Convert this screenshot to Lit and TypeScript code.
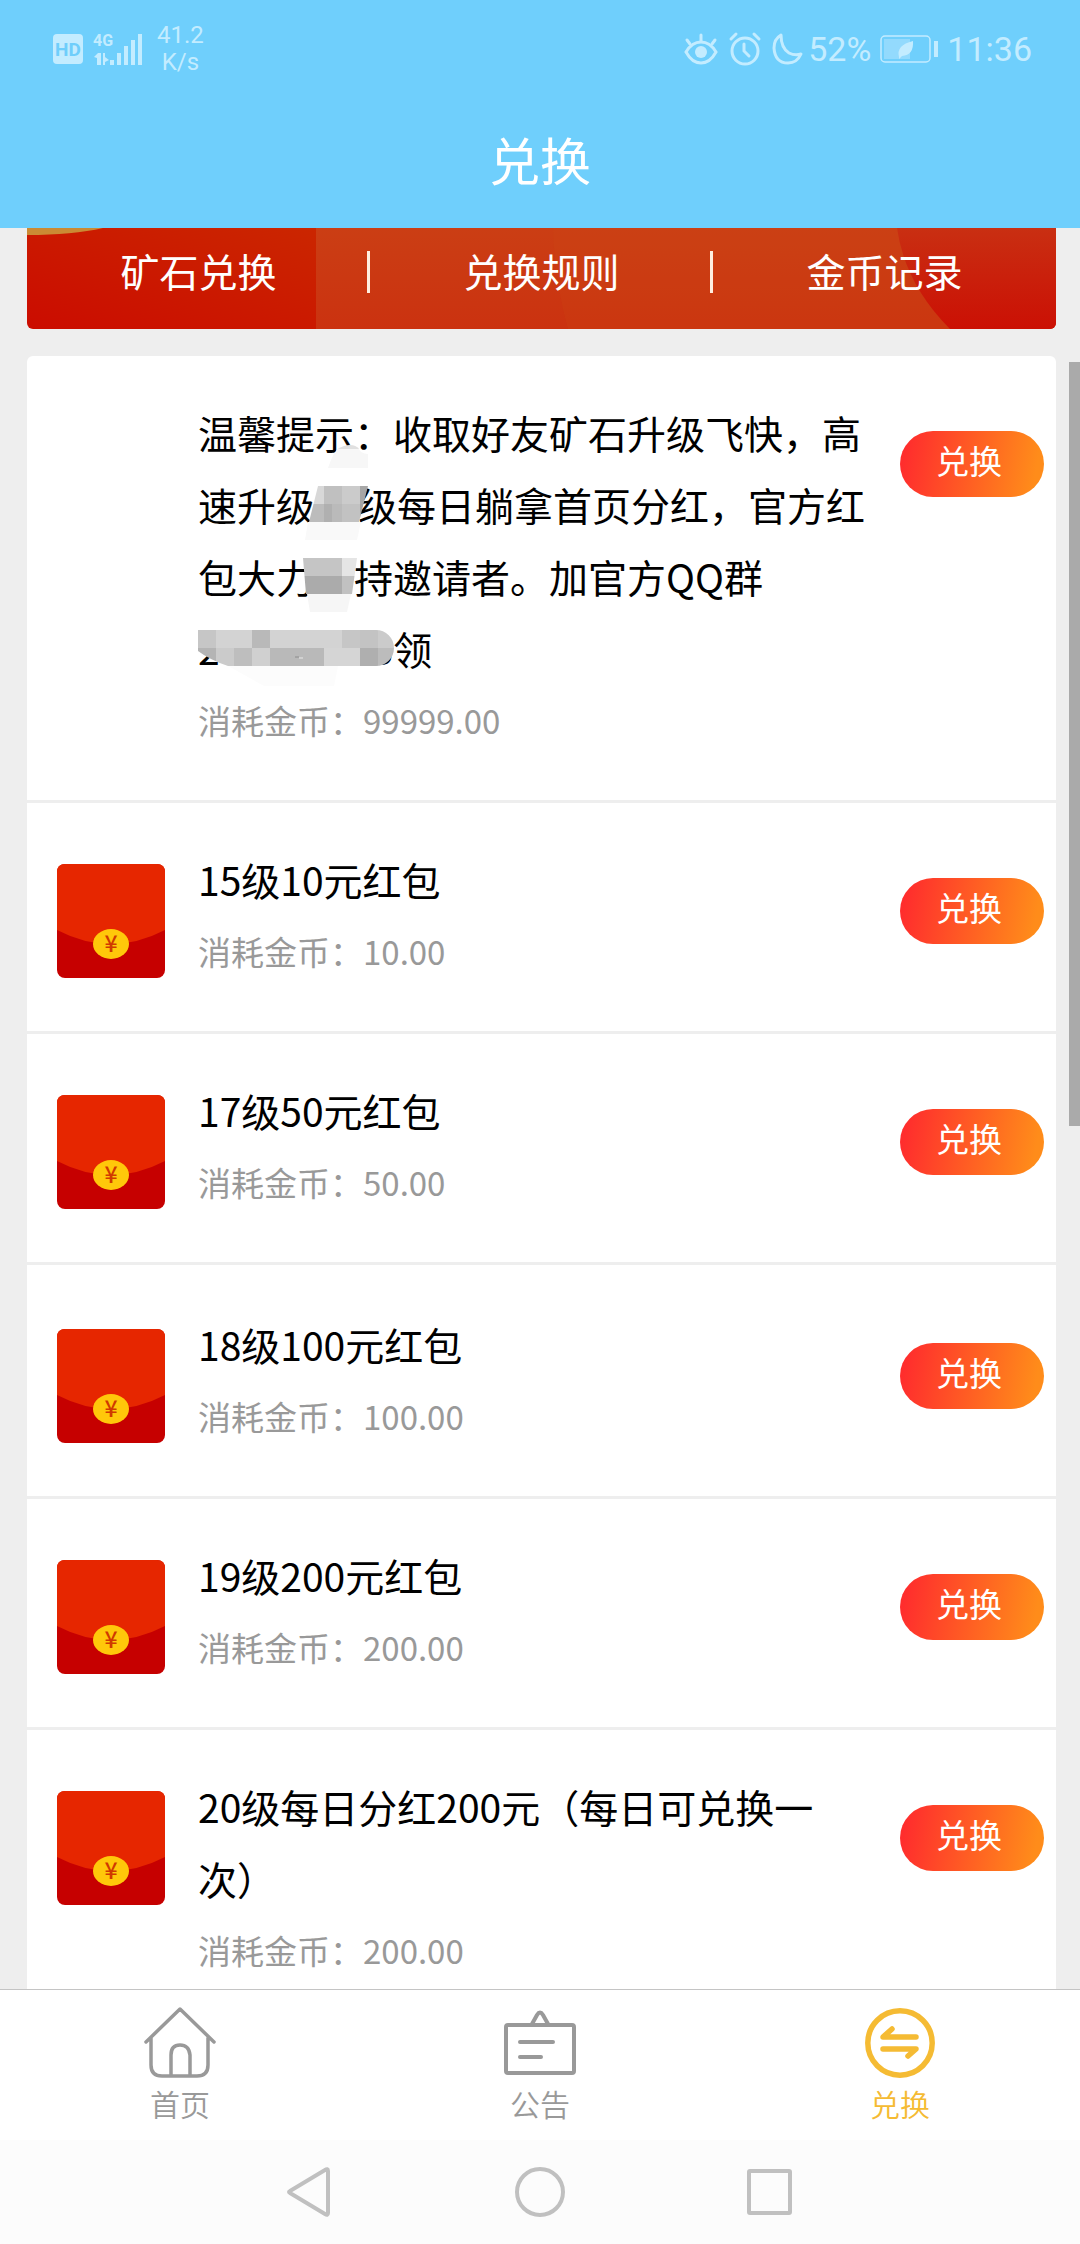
import { LitElement, html, css, svg, nothing } from "lit";
import { customElement, property } from "lit/decorators.js";
import { classMap } from "lit/directives/class-map.js";

interface Reward {
  title: unknown;
  cost: string;
  image: boolean;
  pageStart?: boolean;
}

type Cell = [x: number, y: number, width: number, fill: string];

/* Pixelated blocks laid over the censored parts of the notice, 18px per row. */
const cells: Cell[] = [
  [108, 88, 18, "#d8d8d8"], [126, 88, 18, "#c0c0c0"], [144, 88, 18, "#cbcbcb"], [162, 88, 10, "#a6a6a6"],
  [108, 106, 18, "#bcbcbc"], [126, 106, 8, "#b0b0b0"], [134, 106, 10, "#bababa"], [144, 106, 18, "#c2c2c2"], [162, 106, 10, "#a2a2a2"],
  [104, 160, 40, "#c5c5c5"], [144, 160, 18, "#e5e5e5"],
  [104, 178, 40, "#ababab"], [144, 178, 18, "#c1c1c1"],
  [0, 232, 18, "#c6c6c6"], [18, 232, 36, "#d3d3d3"], [54, 232, 18, "#b9b9b9"], [72, 232, 72, "#d3d3d3"], [144, 232, 18, "#c6c6c6"], [162, 232, 18, "#c3c3c3"], [180, 232, 18, "#cbcbcb"],
  [0, 250, 18, "#b4b4b4"], [18, 250, 18, "#cbcbcb"], [36, 250, 18, "#bebebe"], [54, 250, 18, "#d0d0d0"], [72, 250, 54, "#b9b9b9"], [126, 250, 36, "#d5d5d5"], [162, 250, 18, "#afafaf"], [180, 250, 18, "#bcbcbc"],
];

const mosaic = html`<svg class="mosaic" viewBox="0 -2 200 310" aria-hidden="true">
  <clipPath id="smudge">
    <path d="M120 88H170L161 124H111Z" />
    <path d="M105 160H159L154 196H108Z" />
    <path d="M0 232H178A18 18 0 0 1 178 268H30Q12 262 0 253Z" />
  </clipPath>
  <path d="M130 70Q136 52 142 49H160Q162 56 170 56V70Z" fill="#f7f7f7" />
  <path d="M140 51Q146 47 152 47Q158 47 161 51Z" fill="#e0e0e0" />
  <path d="M110 124H163L159 142H107Z" fill="#f9f9f9" />
  <path d="M109 196H153L149 214H112Z" fill="#f6f6f6" />
  <path d="M30 268H140L136 288H66Z" fill="#fcfcfc" />
  <g clip-path="url(#smudge)">
    ${cells.map(([x, y, w, fill]) => svg`<rect x=${x} y=${y} width=${w} height="18" fill=${fill} shape-rendering="crispEdges" />`)}
    <path d="M97 259h4" stroke="#8c8c8c" stroke-width="1" />
    <path d="M101 260h4" stroke="#e8e8e8" stroke-width="1" />
  </g>
</svg>`;

const notice = html`温馨提示：收取好友矿石升级飞快，高速升级<span class="gap two-digits"></span>级每日躺拿首页分红，官方红包大力<span class="gap one-glyph"></span>持邀请者。加官方QQ群<span class="number">2<span class="gap seven-digits"></span>3</span>领${mosaic}`;

const rewards: Reward[] = [
  { title: notice, cost: "99999.00", image: false },
  { title: "15级10元红包", cost: "10.00", image: true },
  { title: "17级50元红包", cost: "50.00", image: true },
  { title: "18级100元红包", cost: "100.00", image: true, pageStart: true },
  { title: "19级200元红包", cost: "200.00", image: true },
  { title: "20级每日分红200元（每日可兑换一次）", cost: "200.00", image: true },
];

const fontStack = css`Roboto, "Noto Sans CJK SC", sans-serif`;
const cjkStack = css`"Noto Sans CJK SC", "Noto Sans", sans-serif`;

@customElement("status-bar")
class StatusBar extends LitElement {
  static styles = css`
    :host {
      display: flex;
      justify-content: space-between;
      align-items: center;
      height: 98px;
      padding: 0 48px 0 53px;
      color: #c3ecff;
      font-family: ${fontStack};
    }
    .group { display: flex; align-items: center; gap: 8px; }
    .icons { display: flex; align-items: center; gap: 12px; margin-right: -3px; }
    svg { display: block; overflow: visible; fill: none; stroke: currentColor; }
    .solid { fill: currentColor; stroke: none; }
    .hd { fill: #6fcefb; stroke: none; font: 700 19px Roboto, sans-serif; }
    .net { fill: currentColor; stroke: none; font: 700 16px Roboto, sans-serif; }
    .rate { font-size: 24px; line-height: 27px; text-align: center; margin-left: 6px; }
    .big { font-size: 34px; line-height: 40px; }
  `;

  render() {
    return html`
      <div class="group">
        <svg width="30" height="30" viewBox="0 0 30 30" role="img" aria-label="HD">
          <rect class="solid" width="30" height="30" rx="4" />
          <text class="hd" x="15" y="22" text-anchor="middle">HD</text>
        </svg>
        <svg width="52" height="32" viewBox="0 0 52 32" role="img" aria-label="4G">
          <text class="net" x="2" y="13">4G</text>
          <path class="solid" d="M3 24L7 20H10V32H6V25ZM12 20H14V24L18 27L14 29V32H12ZM19 27h4v5h-4ZM26 20h4v12h-4ZM33 13h4v19h-4ZM40 7h4v25h-4ZM47 1h4v31h-4Z" />
        </svg>
        <div class="rate">41.2<br />K/s</div>
      </div>
      <div class="group">
        <div class="icons">
          <svg width="34" height="32" viewBox="0 0 34 32" stroke-width="3" stroke-linecap="round">
            <path d="M2 19Q8 9 17 9T32 19Q26 30 17 30T2 19Z" />
            <path d="M17 8V2M6 11L3 7M28 11L31 7" />
            <circle class="solid" cx="17" cy="19" r="6" />
          </svg>
          <svg width="30" height="32" viewBox="0 0 30 32" stroke-width="3" stroke-linecap="round">
            <circle cx="15" cy="18" r="13" />
            <path d="M14 11V18L19 23M1 6L6 1M29 6L24 1" />
          </svg>
          <svg width="31" height="32" viewBox="0 0 31 32" stroke-width="3" stroke-linejoin="round">
            <path d="M9 2Q2 6 2 15Q3 30 16 30Q25 30 29 21Q23 23 17 20Q9 15 9 2Z" />
          </svg>
        </div>
        <span class="big">52%</span>
        <svg width="60" height="28" viewBox="0 0 60 28" stroke-width="2">
          <rect x="2" y="1" width="49" height="26" rx="4" stroke-width="1.5" />
          <rect x="5" y="4" width="26" height="20" fill="#93dafd" stroke="none" />
          <path class="solid" d="M20 22Q17 10 34 6Q35 20 23 21L20 24ZM55 6h4v16h-4Z" />
        </svg>
        <span class="big">11:36</span>
      </div>
    `;
  }
}

@customElement("reward-row")
class RewardRow extends LitElement {
  @property({ attribute: false }) reward!: Reward;

  static styles = css`
    :host { display: block; border-bottom: 3px solid #eee; }
    .row {
      display: grid;
      grid-template-columns: 108px minmax(0, 1fr) 144px;
      align-items: start;
      padding: 40px 12px 44px 30px;
    }
    .page-start { padding-top: 43px; }
    .picture { width: 108px; height: 114px; margin-top: 21px; }
    .picture svg { display: block; }
    .yen { font: 500 23px ${cjkStack}; fill: #d03a00; }
    .info { padding: 0 30px 0 33px; }
    h2, p { margin: 0; font-weight: 400; line-height: 72px; text-spacing-trim: space-all; }
    h2 { position: relative; font-size: 39px; color: #000; }
    p { font-size: 33px; color: #999; }
    .gap { display: inline-block; height: 1px; }
    .two-digits { width: 43px; }
    .one-glyph { width: 39px; }
    .seven-digits { width: 152px; }
    .number { white-space: nowrap; }
    .mosaic { position: absolute; left: 0; top: 0; width: 200px; height: 310px; }
    button {
      height: 66px;
      margin-top: 35px;
      padding: 0 6px 8px 0;
      border: 0;
      border-radius: 33px;
      background: linear-gradient(100deg, #ff2d2d 5%, #ff8c1a 92%);
      color: #fff;
      font: 400 33px/58px ${cjkStack};
    }
  `;

  private envelope() {
    return html`<svg width="108" height="114" viewBox="0 0 108 114" aria-hidden="true">
      <rect width="108" height="114" rx="8" fill="#c60000" />
      <path d="M0 8Q0 0 8 0H100Q108 0 108 8V66Q54 94 0 66Z" fill="#e62600" />
      <ellipse cx="54" cy="80" rx="18" ry="15" fill="#ffc80a" />
      <text class="yen" x="54" y="88" text-anchor="middle">¥</text>
    </svg>`;
  }

  render() {
    const { title, cost, image, pageStart } = this.reward;
    return html`
      <div class=${classMap({ row: true, "page-start": !!pageStart })}>
        <div class="picture">${image ? this.envelope() : nothing}</div>
        <div class="info">
          <h2>${title}</h2>
          <p>消耗金币：${cost}</p>
        </div>
        <button type="button">兑换</button>
      </div>
    `;
  }
}

@customElement("app-root")
class AppRoot extends LitElement {
  static styles = css`
    :host {
      display: flex;
      flex-direction: column;
      height: 100vh;
      overflow: hidden;
      background: #eee;
      font-family: ${cjkStack};
    }
    a { color: inherit; text-decoration: none; }
    header { background: #6fcffc; }
    h1 {
      margin: 0;
      padding-bottom: 8px;
      color: #fff;
      font-size: 51px;
      font-weight: 400;
      line-height: 122px;
      text-align: center;
    }
    main {
      position: relative;
      flex: 1;
      min-height: 0;
      overflow: hidden;
      padding: 0 24px 0 27px;
    }
    .thumb {
      position: absolute;
      top: 134px;
      right: 0;
      width: 11px;
      height: 764px;
      background: #aaa;
    }
    .banner {
      position: relative;
      display: grid;
      grid-template-columns: repeat(3, 1fr);
      padding: 23px 0 36px;
      border-radius: 0 0 6px 6px;
      overflow: hidden;
      color: #fff;
      font-size: 39px;
      line-height: 38px;
      text-align: center;
    }
    .art { position: absolute; inset: 0; width: 100%; height: 100%; }
    .banner a { position: relative; padding-bottom: 4px; }
    .banner a + a { box-shadow: -3px 0 #ffeee0; }
    .list { margin-top: 27px; border-radius: 6px 6px 0 0; background: #fff; overflow: hidden; }
    .tabs {
      display: grid;
      grid-template-columns: repeat(3, 1fr);
      border-top: 1px solid #c4c4c4;
      background: #fff;
    }
    .tab {
      display: flex;
      flex-direction: column;
      align-items: center;
      padding: 16px 0;
      color: #999;
      font-size: 30px;
      font-weight: 350;
      line-height: 42px;
    }
    .tab svg { display: block; margin-bottom: 4px; fill: none; stroke: currentColor; stroke-linecap: round; stroke-linejoin: round; }
    .active { color: #f5bb33; }
    .system { display: flex; padding: 0 18%; background: #fcfcfc; }
    .system button {
      flex: 1;
      display: flex;
      justify-content: center;
      align-items: center;
      height: 104px;
      padding: 0;
      border: 0;
      background: none;
    }
    .system svg { fill: none; stroke: #c0c0c0; stroke-width: 4; stroke-linejoin: round; }
  `;

  render() {
    return html`
      <header>
        <status-bar></status-bar>
        <h1>兑换</h1>
      </header>
      <main>
        <nav class="banner">
          <svg class="art" viewBox="0 0 1029 101" preserveAspectRatio="none" aria-hidden="true">
            <defs>
              <linearGradient id="deep" x1="1" y1="0" x2="0" y2="1">
                <stop offset="0" stop-color="#cb2600" />
                <stop offset="1" stop-color="#cb0c00" />
              </linearGradient>
              <linearGradient id="warm" x1="0" y1="0" x2="0" y2="1">
                <stop offset="0" stop-color="#cb3e14" />
                <stop offset="1" stop-color="#cb3210" />
              </linearGradient>
              <linearGradient id="edge" x1="0" y1="0" x2="0" y2="1">
                <stop offset="0" stop-color="#c92f12" />
                <stop offset="1" stop-color="#cb1004" />
              </linearGradient>
            </defs>
            <rect width="290" height="101" fill="url(#deep)" />
            <path d="M289 0H1029V101H289Z" fill="url(#warm)" />
            <path d="M526 0Q527 50 541 101H1029V0Z" fill="#cb4a14" opacity="0.2" />
            <path d="M870 0Q878 56 923 101H1029V0Z" fill="url(#edge)" />
            <path d="M0 0H76Q46 7 0 7Z" fill="#cb8a34" />
          </svg>
          <a href="#ore">矿石兑换</a>
          <a href="#rules">兑换规则</a>
          <a href="#records">金币记录</a>
        </nav>
        <section class="list">
          ${rewards.map((reward) => html`<reward-row .reward=${reward}></reward-row>`)}
        </section>
        <div class="thumb"></div>
      </main>
      <nav class="tabs">
        <a class="tab" href="#home">
          <svg width="72" height="72" viewBox="0 0 72 72" stroke-width="3.5">
            <path d="M2 36L36 3L70 36M7 32V59Q7 70 18 70H53Q64 70 64 59V32M27 70V49Q27 39 36 39T46 49V70" />
          </svg>
          首页
        </a>
        <a class="tab" href="#news">
          <svg width="72" height="72" viewBox="0 0 72 72" stroke-width="4">
            <rect x="2" y="19" width="68" height="48" rx="2" />
            <path d="M28 18L33 9Q36 4 39 9L44 18M16 36H49M16 51H37" />
          </svg>
          公告
        </a>
        <a class="tab active" href="#exchange">
          <svg width="72" height="72" viewBox="0 0 72 72" stroke-width="5.5">
            <circle cx="36" cy="37" r="32.2" />
            <path d="M52 31H19L28 23M19 43H52L44 50" />
          </svg>
          兑换
        </a>
      </nav>
      <nav class="system">
        <button type="button" aria-label="返回">
          <svg width="50" height="56" viewBox="0 0 50 56"><path d="M5 27L40 6Q43 4 43 7V49Q43 52 40 50L5 29Q3 28 5 27Z" /></svg>
        </button>
        <button type="button" aria-label="主屏幕">
          <svg width="56" height="56" viewBox="0 0 56 56"><circle cx="28" cy="28" r="23" /></svg>
        </button>
        <button type="button" aria-label="最近任务">
          <svg width="56" height="56" viewBox="0 0 56 56"><rect x="7" y="7" width="41" height="42" rx="1" /></svg>
        </button>
      </nav>
    `;
  }
}
